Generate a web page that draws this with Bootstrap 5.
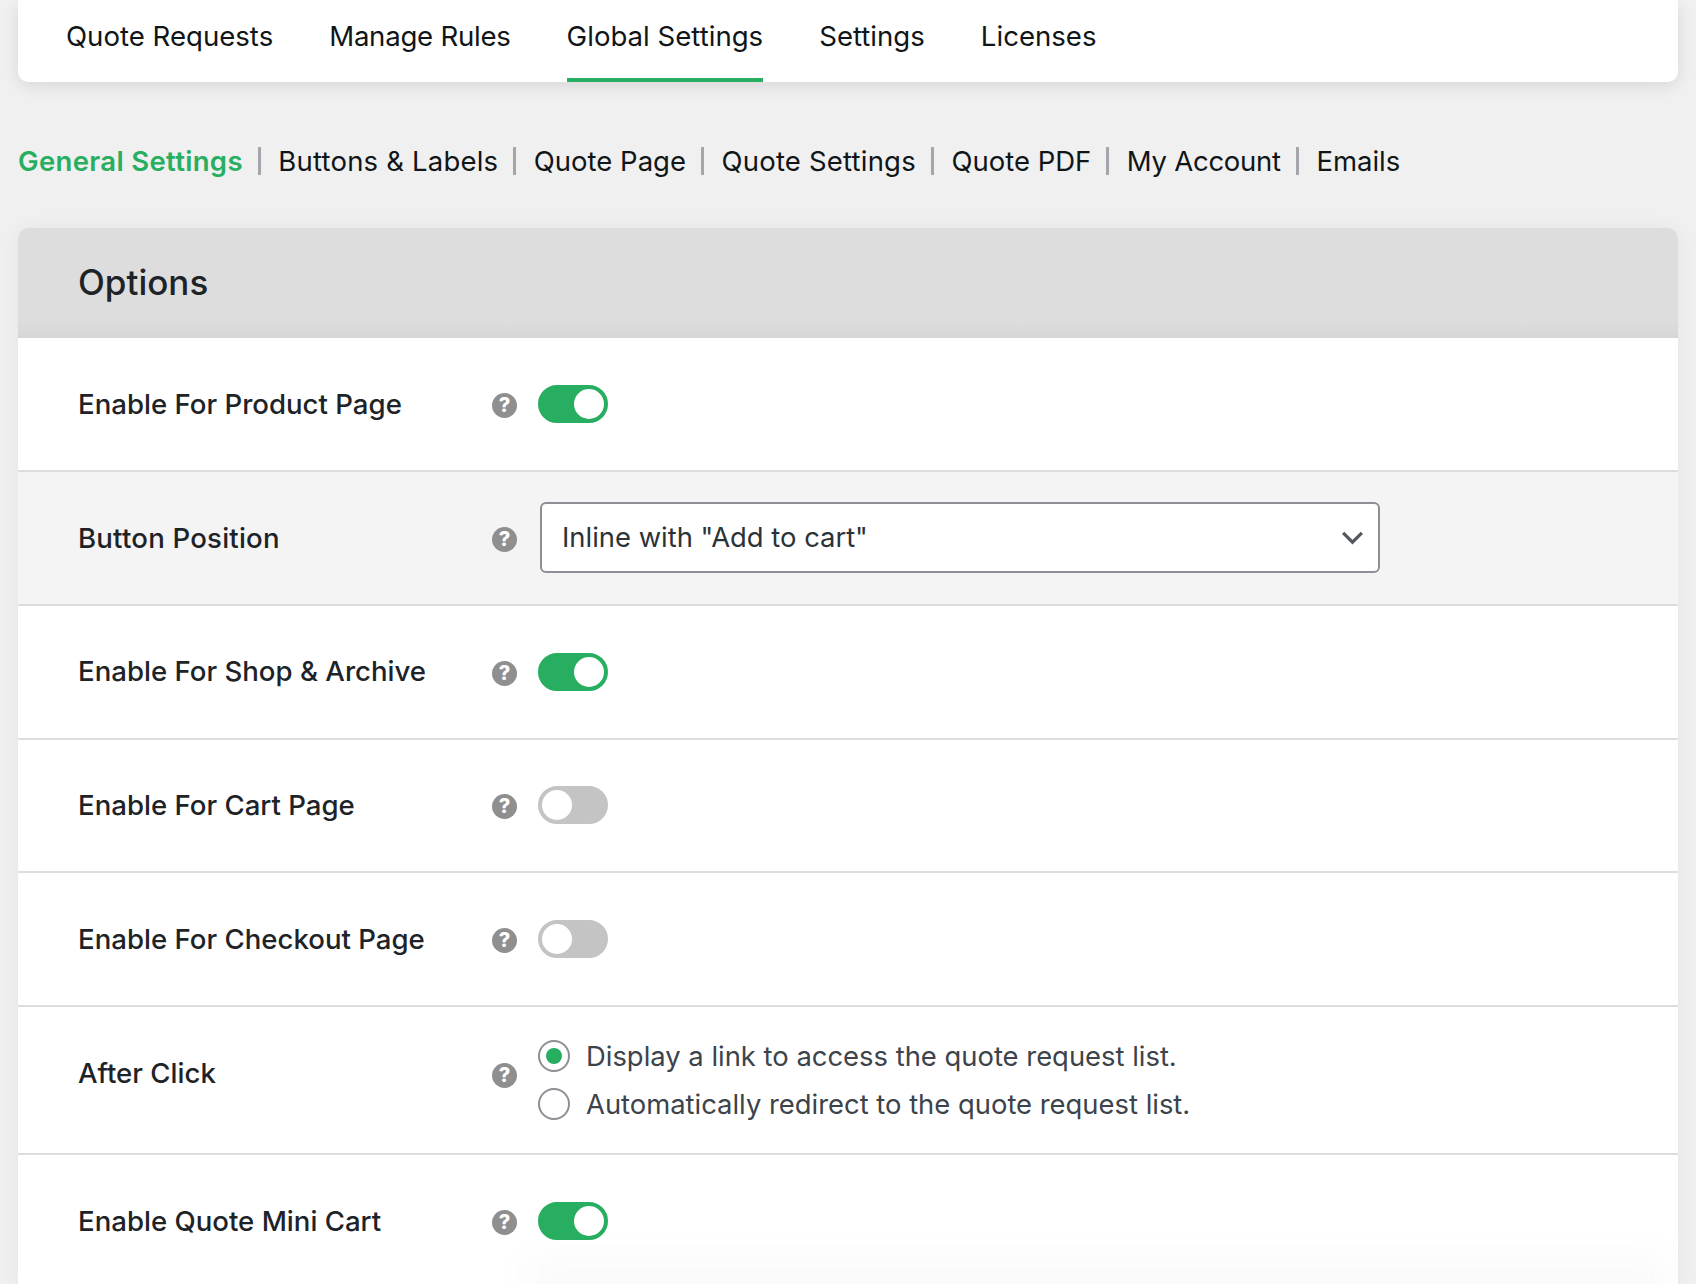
<!DOCTYPE html>
<html lang="en">
<head>
<meta charset="utf-8">
<title>Global Settings</title>
<link href="https://cdn.jsdelivr.net/npm/bootstrap@5.3.0/dist/css/bootstrap.min.css" rel="stylesheet">
<style>
html, body { height: 1284px; overflow: hidden; }
body { background: #f0f0f0; font-family: Inter, "Liberation Sans", sans-serif; padding: 0 18px; color: #1d2327; }
.top-bar { height: 82px; background: #fff; border-radius: 0 0 10px 10px; box-shadow: 0 4px 16px rgba(0,0,0,.1); padding-left: 48px; gap: 56px; }
.top-bar .nav-link { height: 82px; padding: 16px 0 0; font-size: 27.6px; line-height: 40px; color: #101517; border-bottom: 4px solid transparent; }
.top-bar .nav-link.active { border-bottom-color: #27ae60; }
.sub-bar { margin-top: 62px; height: 34px; }
.sub-bar .nav-link { padding: 0; font-size: 27.5px; line-height: 34px; color: #101517; }
.sub-bar .nav-link.active { color: #27ae60; font-weight: 600; letter-spacing: .33px; }
.sub-bar li + li { margin-left: 15px; padding-left: 20.5px; background: linear-gradient(#a5a5ab,#a5a5ab) left center / 3px 28px no-repeat; }
.nav-link.ls-up, .opt-label.ls-up { letter-spacing: .2px; }
.nav-link.ls-down { letter-spacing: -.25px; }
.panel { margin-top: 50px; border-radius: 10px 10px 0 0; background: #fff; box-shadow: 0 0 20px rgba(0,0,0,.05); }
.panel-head { height: 110px; padding-left: 60px; background: linear-gradient(#ddd 85%, #d6d6d6); border-radius: 10px 10px 0 0; }
.panel-head h2 { margin: 0 0 2px; font-size: 35px; font-weight: 500; color: #1d2327; }
.opt-row { min-height: 133.85px; padding-left: 60px; border-bottom: 2px solid #ddd; }
.opt-row.tinted { background: #f4f4f4; }
.opt-row.tall { min-height: 148px; }
.opt-row.last-one { position: relative; overflow: hidden; }
.opt-row.last-one::before { content: ""; position: absolute; left: 510px; right: 10px; bottom: -40px; height: 70px; background: #fafafa; filter: blur(14px); }
.opt-label { width: 414px; margin: 1px 0 0; font-size: 27.6px; font-weight: 500; color: #1d2327; }
.help-dot { width: 25px; height: 25px; margin-right: 21px; margin-top: 3px; border-radius: 50%; background: #8f8f8f; color: #fff; font-size: 20px; font-weight: 800; line-height: 25px; text-align: center; }
.tall .opt-label { margin-bottom: 14px; }
.tall .help-dot { margin-bottom: 13px; }
.form-switch.sw { position: relative; margin: 0; padding: 0; min-height: 0; height: 38px; }
.form-switch.sw .form-check-input { float: none; display: block; margin: 0; width: 70px; height: 38px; border: 2px solid #c4c4c4; border-radius: 19px; background-color: #c4c4c4; background-size: 30px 30px; background-position: left 2px center; background-image: url("data:image/svg+xml,%3csvg xmlns='http://www.w3.org/2000/svg' viewBox='-4 -4 8 8'%3e%3ccircle r='4' fill='%23fff'/%3e%3c/svg%3e"); }
.form-switch.sw .form-check-input:checked { border-color: #27ae60; background-color: #27ae60; background-position: right 2px center; }
.form-select.pick { width: 840px; height: 71px; padding: 0 50px 0 20px; margin-left: 2px; border: 2px solid #8c8f94; border-radius: 6px; font-size: 27.4px; color: #2c3338; background-image: url("data:image/svg+xml,%3csvg xmlns='http://www.w3.org/2000/svg' viewBox='0 0 16 16'%3e%3cpath fill='none' stroke='%2350575e' stroke-width='2' d='m2 5 6 6 6-6'/%3e%3c/svg%3e"); background-size: 25px; background-position: right 13px center; }
.choice { margin: 0; padding: 0; min-height: 0; height: 32px; gap: 16px; }
.choice .form-check-input { float: none; margin: 0; width: 32px; height: 32px; flex: none; border: 2px solid #8c8f94; }
.choice .form-check-input:checked { background-color: #fff; border-color: #8c8f94; background-size: 32px; background-image: url("data:image/svg+xml,%3csvg xmlns='http://www.w3.org/2000/svg' viewBox='-16 -16 32 32'%3e%3ccircle r='8' fill='%2327ae60'/%3e%3c/svg%3e"); }
.choice .form-check-label { font-size: 27.4px; line-height: 32px; color: #3c434a; }
.choices { gap: 16px; }
</style>
</head>
<body>
<ul class="nav top-bar d-flex align-items-start">
  <li class="nav-item"><a class="nav-link" href="#">Quote Requests</a></li>
  <li class="nav-item"><a class="nav-link ls-down" href="#">Manage Rules</a></li>
  <li class="nav-item"><a class="nav-link active" href="#">Global Settings</a></li>
  <li class="nav-item"><a class="nav-link" href="#">Settings</a></li>
  <li class="nav-item"><a class="nav-link" href="#">Licenses</a></li>
</ul>
<ul class="nav sub-bar">
  <li class="nav-item"><a class="nav-link active" href="#">General Settings</a></li>
  <li class="nav-item"><a class="nav-link ls-up" href="#">Buttons &amp; Labels</a></li>
  <li class="nav-item"><a class="nav-link" href="#">Quote Page</a></li>
  <li class="nav-item"><a class="nav-link ls-up" href="#">Quote Settings</a></li>
  <li class="nav-item"><a class="nav-link" href="#">Quote PDF</a></li>
  <li class="nav-item"><a class="nav-link ls-down" href="#">My Account</a></li>
  <li class="nav-item"><a class="nav-link" href="#">Emails</a></li>
</ul>
<section class="panel">
  <div class="panel-head d-flex align-items-center"><h2>Options</h2></div>
  <div class="opt-row d-flex align-items-center">
    <p class="opt-label">Enable For Product Page</p><span class="help-dot">?</span>
    <div class="form-check form-switch sw"><input class="form-check-input" type="checkbox" role="switch" checked></div>
  </div>
  <div class="opt-row tinted d-flex align-items-center">
    <p class="opt-label ls-up">Button Position</p><span class="help-dot">?</span>
    <select class="form-select pick"><option>Inline with "Add to cart"</option></select>
  </div>
  <div class="opt-row d-flex align-items-center">
    <p class="opt-label">Enable For Shop &amp; Archive</p><span class="help-dot">?</span>
    <div class="form-check form-switch sw"><input class="form-check-input" type="checkbox" role="switch" checked></div>
  </div>
  <div class="opt-row d-flex align-items-center">
    <p class="opt-label">Enable For Cart Page</p><span class="help-dot">?</span>
    <div class="form-check form-switch sw"><input class="form-check-input" type="checkbox" role="switch"></div>
  </div>
  <div class="opt-row d-flex align-items-center">
    <p class="opt-label">Enable For Checkout Page</p><span class="help-dot">?</span>
    <div class="form-check form-switch sw"><input class="form-check-input" type="checkbox" role="switch"></div>
  </div>
  <div class="opt-row tall d-flex align-items-center">
    <p class="opt-label">After Click</p><span class="help-dot">?</span>
    <div class="choices d-flex flex-column">
      <div class="form-check choice d-flex align-items-center"><input class="form-check-input" type="radio" name="after" id="a1" checked><label class="form-check-label" for="a1">Display a link to access the quote request list.</label></div>
      <div class="form-check choice d-flex align-items-center"><input class="form-check-input" type="radio" name="after" id="a2"><label class="form-check-label" for="a2">Automatically redirect to the quote request list.</label></div>
    </div>
  </div>
  <div class="opt-row last-one d-flex align-items-center">
    <p class="opt-label">Enable Quote Mini Cart</p><span class="help-dot">?</span>
    <div class="form-check form-switch sw"><input class="form-check-input" type="checkbox" role="switch" checked></div>
  </div>
</section>
<script src="https://cdn.jsdelivr.net/npm/bootstrap@5.3.0/dist/js/bootstrap.bundle.min.js"></script>
</body>
</html>
